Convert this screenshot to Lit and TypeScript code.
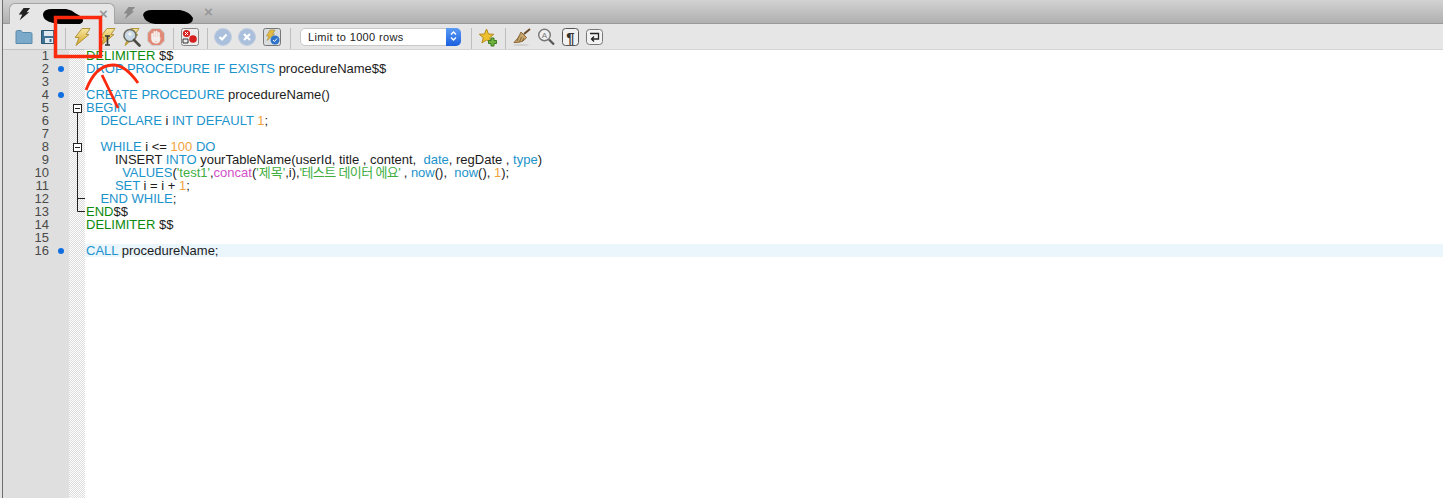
import { LitElement, html, css, svg } from "lit";
import { customElement } from "lit/decorators.js";

type Seg = [string, string?];
interface Line { n: number; dot?: boolean; fold?: string; segs: Seg[]; active?: boolean }

const LINES: Line[] = [
  { n: 1, segs: [["DELIMITER", "g"], [" $$"]] },
  { n: 2, dot: true, segs: [["DROP PROCEDURE IF EXISTS", "k"], [" procedureName$$"]] },
  { n: 3, segs: [] },
  { n: 4, dot: true, segs: [["CREATE PROCEDURE", "k"], [" procedureName()"]] },
  { n: 5, fold: "open", segs: [["BEGIN", "k"]] },
  { n: 6, fold: "line", segs: [["    "], ["DECLARE", "k"], [" i "], ["INT DEFAULT", "k"], [" "], ["1", "o"], [";"]] },
  { n: 7, fold: "line", segs: [] },
  { n: 8, fold: "open2", segs: [["    "], ["WHILE", "k"], [" i <= "], ["100", "o"], [" "], ["DO", "k"]] },
  { n: 9, fold: "line", segs: [["        INSERT "], ["INTO", "k"], [" yourTableName(userId, title , content,  "], ["date", "k"], [", regDate , "], ["type", "k"], [")"]] },
  { n: 10, fold: "line", segs: [["          "], ["VALUES", "k"], ["("], ["'test1'", "s"], [","], ["concat", "f"], ["("], ["'제목'", "s"], [",i),"], ["'테스트 데이터 에요'", "s n"], [" , "], ["now", "k"], ["(),  "], ["now", "k"], ["(), "], ["1", "o"], [");"]] },
  { n: 11, fold: "line", segs: [["        "], ["SET", "k"], [" i = i + "], ["1", "o"], [";"]] },
  { n: 12, fold: "tee", segs: [["    "], ["END WHILE", "k"], [";"]] },
  { n: 13, fold: "end", segs: [["END", "g"], ["$$"]] },
  { n: 14, segs: [["DELIMITER", "g"], [" $$"]] },
  { n: 15, segs: [] },
  { n: 16, dot: true, active: true, segs: [["CALL", "k"], [" procedureName;"]] },
];

const bolt = (id: string) => svg`
  <defs><linearGradient id="${id}" x1="0" y1="0" x2="0" y2="1"><stop offset="0" stop-color="#f6e6a0"/><stop offset="1" stop-color="#d2a526"/></linearGradient></defs>
  <path d="M10 1.500 H18 L14 7.500 H17 L4 18.500 L7 10.500 H3 Z" fill="url(#${id})" stroke="#b2953a" stroke-width="1"/>`;

const lens = svg`<circle cx="9" cy="8.500" r="6" fill="#c9d8e6" stroke="#6d6d60" stroke-width="1.600"/><circle cx="9" cy="7" r="1.800" fill="#f3f3ee"/><path d="M13 13 L18.500 18.500" stroke="#4c4b44" stroke-width="2.600" stroke-linecap="round"/>`;

function ico(body: unknown) {
  return html`<svg class="ico" width="20" height="20" viewBox="0 0 20 20" aria-hidden="true">${body}</svg>`;
}

const boxed = svg`<rect x="4.500" y="3.500" width="8" height="8" fill="#fff" stroke="#222"/><path d="M6 7.500h5M8.500 11.500V13" stroke="#222" fill="none"/>`;
const foldSvg: Record<string, unknown> = {
  open: boxed,
  open2: svg`<path d="M8.500 0V3.500" stroke="#222"/>${boxed}`,
  line: svg`<path d="M8.500 0V13" stroke="#222" fill="none"/>`,
  tee: svg`<path d="M8.500 0V13M8.500 6.500H16" stroke="#222" fill="none"/>`,
  end: svg`<path d="M8.500 0V6.500H16" stroke="#222" fill="none"/>`,
};

@customElement("app-root")
export class AppRoot extends LitElement {
  static styles = css`
    :host { display: block; position: relative; width: 1443px; height: 498px; overflow: hidden; background: #fff;
      font-family: "Liberation Sans", "Noto Sans CJK KR", sans-serif; }
    .tabbar { height: 24px; display: flex; align-items: flex-end; padding-left: 9px; box-sizing: border-box;
      background: linear-gradient(#d2d2d2, #b0b0b0); border-bottom: 1px solid #9a9a9a; }
    .tab { box-sizing: border-box; display: flex; align-items: center; position: relative; height: 20px; }
    .tab.on { width: 106px; height: 21px; margin-bottom: -1px; background: #e6e6e6; border: 1px solid #a5a5a5; border-bottom: 0; border-radius: 6px 6px 0 0; padding-left: 7px; }
    .tab.off { width: 100px; padding-left: 7px; }
    .close { font-size: 15px; font-weight: bold; color: #999; line-height: 1; position: absolute; left: 89px; top: 2px; }
    .off .close { left: 89px; top: 1px; }
    .toolbar { height: 25px; padding-top: 1px; background: #e6e6e6; box-sizing: border-box; display: flex; align-items: center; padding-left: 14px; }
    .ico { display: block; flex: none; margin-right: 4.5px; }
    .sep { width: 1px; height: 21px; align-self: flex-end; background: #bdbdbd; flex: none; margin: 0 6px 0 2px; }
    .sep.a { margin-left: 3px; }
    .sep.b { margin-right: 5px; }
    .sep.c { margin: 0 9px 0 4px; }
    .sep.d { margin: 0 6px 0 10px; }
    .combo { width: 161px; height: 18px; flex: none; box-sizing: border-box; background: #fff; border-radius: 5px; border: 1px solid #c8c8c8; position: relative; margin-top: -1px;
      font-size: 11px; line-height: 16px; padding-left: 7px; color: #222; letter-spacing: .35px; }
    .combo i { position: absolute; right: -1px; top: -1px; bottom: -1px; width: 15px; background: linear-gradient(#5c9cf5, #1a5fe0); border-radius: 0 5px 5px 0; }
    .combo svg { position: absolute; left: 3px; top: 2.500px; }
    .editor { position: relative; height: 449px; background: #fff; display: flex; }
    .gutter { flex: none; width: 69px; background: #dfdfdf; box-shadow: inset 0 1px #c4c4c4; }
    .margin { width: 16px; flex: none; background-color: #fff; background-image: repeating-conic-gradient(#dcdcdc 0 25%, #fff 0 50%); background-size: 2px 2px; box-shadow: inset 0 1px #c4c4c4; }
    .code { flex: 1; box-shadow: inset 0 1px #d4d4d4; }
    .rows { position: absolute; inset: 0; display: flex; flex-direction: column; }
    .row { flex: none; height: 13px; display: grid; grid-template-columns: 49px 18px 18px 1fr; font-size: 13px; line-height: 13px; white-space: pre; color: #1c1c1c; }
    .num { text-align: right; color: #4a4a4a; }
    .dotc { display: flex; align-items: center; padding-left: 9px; }
    .dot { width: 6px; height: 6px; border-radius: 50%; background: #0f6fe0; }
    .foldc svg { display: block; margin-left: 2px; }
    .txt { padding-left: 1px; }
    .row.active .txt { background: #eaf6fc; }
    .k { color: #1b93cc; } .g { color: #0b8a0b; } .o { color: #f0a23c; } .s { color: #3fae3f; } .f { color: #d24fc8; }
    .n { letter-spacing: -.62px; }
    .strip { position: absolute; left: 0; top: 0; bottom: 0; width: 2px; background: #e2e2e2; border-right: 1px solid #6e6e6e; }
    .overlay { position: absolute; left: 0; top: 0; width: 1443px; height: 498px; pointer-events: none; }
  `;

  render() {
    return html`
      <div class="tabbar">
        <div class="tab on">
          <svg width="14" height="14" viewBox="0 0 16 16"><path d="M7.500 1 H15 L11 6 H14 L3 15 L6 8.500 H2 Z" fill="#222"/></svg>
          <span class="close">×</span>
        </div>
        <div class="tab off">
          <svg width="14" height="14" viewBox="0 0 16 16"><path d="M7.500 1 H15 L11 6 H14 L3 15 L6 8.500 H2 Z" fill="#8a8a8a"/></svg>
          <span class="close">×</span>
        </div>
      </div>
      <div class="toolbar">
        ${ico(svg`<path d="M2 5 Q2 3.500 3.500 3.500 H7 L8.500 5.500 H16.500 Q18 5.500 18 7 V16.500 H2 Z" fill="#7aa9c9" stroke="#5a8aaa"/>`)}
        ${ico(svg`<path d="M2.500 3.500 H15 L17.500 6 V16.500 H2.500 Z" fill="#3f7396" stroke="#2c5672"/><rect x="5" y="4" width="9" height="5" fill="#dfe8ee"/><rect x="6" y="11" width="8" height="5" fill="#dfe8ee"/><rect x="10.500" y="12" width="2" height="3" fill="#3f7396"/>`)}
        <span class="sep"></span>
        ${ico(bolt("b1"))}
        ${ico(svg`${bolt("b2")}<path d="M8 9h5M8 18h5M10.500 9v9" stroke="#333" stroke-width="1.600"/>`)}
        ${ico(svg`${bolt("b3")}${lens}`)}
        ${ico(svg`<path d="M6 1.500 H14 L18.500 6 V14 L14 18.500 H6 L1.500 14 V6 Z" fill="#e28a78" stroke="#cfcfcf"/><path d="M6.200 11 V7 M8.400 10 V5 M10.600 10 V4.800 M12.800 10.500 V6 M6.200 11 Q6 15.500 10 15.500 Q13.500 15.500 13.500 11" stroke="#f4efec" stroke-width="2" fill="none" stroke-linecap="round"/><path d="M7 10h6v4H7z" fill="#f4efec"/>`)}
        <span class="sep a"></span>
        ${ico(svg`<rect x="1.500" y="1.500" width="17" height="17" rx="2" fill="#ededed" stroke="#888"/><circle cx="6.500" cy="6.500" r="3.600" fill="#d62020"/><circle cx="13" cy="12" r="3.800" fill="#d62020"/><path d="M5 5l3 3M8 5l-3 3" stroke="#fff"/><path d="M3 12h5v4H3z" fill="none" stroke="#333"/>`)}
        <span class="sep b"></span>
        ${ico(svg`<circle cx="10" cy="10" r="8.500" fill="#a9bfdc" stroke="#c2cfdf"/><path d="M6.500 10l2.500 2.500 4.500-5" stroke="#fff" stroke-width="2.200" fill="none"/>`)}
        ${ico(svg`<circle cx="10" cy="10" r="8.500" fill="#a9bfdc" stroke="#c2cfdf"/><path d="M7 7l6 6M13 7l-6 6" stroke="#fff" stroke-width="2.200" fill="none"/>`)}
        ${ico(svg`<rect x="1.500" y="1.500" width="17" height="17" rx="2" fill="#d9dde0" stroke="#777"/><path d="M8 3 H13 L10.500 7 H12.500 L5 13.500 L7 9 H4.500 Z" fill="#e2bc45" stroke="#a88a2a" stroke-width=".6"/><circle cx="13" cy="13" r="4.500" fill="#2f74c8"/><path d="M11 13l1.500 1.500 2.500-3" stroke="#fff" fill="none"/>`)}
        <span class="sep c"></span>
        <div class="combo">Limit to 1000 rows<i><svg width="9" height="12" viewBox="0 0 9 12"><path d="M2 4.500l2.500-2.500L7 4.500M2 7.500l2.500 2.500L7 7.500" stroke="#fff" stroke-width="1.400" fill="none"/></svg></i></div>
        <span class="sep d"></span>
        ${ico(svg`<path d="M8.500 2l2 5 5.300.3-4.100 3.400 1.400 5.200L8.500 13l-4.600 2.900 1.400-5.200L1.200 7.300 6.500 7z" fill="#eec22e" stroke="#b58a1a"/><path d="M13 11h3v2.500h2.500v3H16V19h-3v-2.500h-2.500v-3H13z" fill="#6fb23f" stroke="#3f7a1f"/>`)}
        <span class="sep"></span>
        ${ico(svg`<path d="M18 2 L12 7" stroke="#6b4a2a" stroke-width="2"/><path d="M9 5 L14.500 10.500 Q11 16 2 15.500 Q7 11 9 5Z" fill="#c5a36a" stroke="#8a6a3a"/><path d="M7 9l-2 5M9.500 10l-2 5M12 11l-2 4" stroke="#8a6a3a" fill="none"/><ellipse cx="9" cy="18" rx="8" ry="1" fill="#d0d0d0"/>`)}
        ${ico(svg`<circle cx="8.500" cy="8" r="5.800" fill="#f0f0f0" stroke="#777" stroke-width="1.400"/><path d="M13 12.500L18 17.500" stroke="#555" stroke-width="2.200"/><text x="8.500" y="11" font-size="8" text-anchor="middle" fill="#777" font-family="Liberation Sans">A</text>`)}
        ${ico(svg`<rect x="1.500" y="1.500" width="16" height="17" rx="3" fill="#f2f2f2" stroke="#555"/><text x="9.500" y="15.500" font-size="15" font-weight="bold" text-anchor="middle" fill="#333" font-family="Liberation Sans">¶</text>`)}
        ${ico(svg`<rect x="1.500" y="2.500" width="16" height="15" rx="3" fill="#f2f2f2" stroke="#777"/><path d="M5 6.500h8.500V12H7M9 9.500L6.500 12 9 14.500" stroke="#222" stroke-width="1.300" fill="none"/>`)}
      </div>
      <div class="editor">
        <div class="gutter"></div>
        <div class="margin"></div>
        <div class="code"></div>
        <div class="rows">
          ${LINES.map((l) => html`
            <div class="row ${l.active ? "active" : ""}">
              <span class="num">${l.n}</span>
              <span class="dotc">${l.dot ? html`<span class="dot"></span>` : ""}</span>
              <span class="foldc">${l.fold ? html`<svg width="16" height="13" viewBox="0 0 16 13">${foldSvg[l.fold]}</svg>` : ""}</span>
              <span class="txt">${l.segs.map(([t, c]) => (c ? html`<span class="${c}">${t}</span>` : t))}</span>
            </div>`)}
        </div>
      </div>
      <div class="strip"></div>
      <svg class="overlay" viewBox="0 0 1443 498" aria-hidden="true">
        <path d="M43 14 Q44 9 52 9 L66 9 Q72 10 75 13 L82 17 Q85 22 80 24 L60 24 Q50 23 46 20 Q43 18 43 14Z" fill="#000"/>
        <path d="M143 15 Q144 10 152 10 H180 Q190 12 193 18 Q193 24 185 24 H155 Q145 23 143 15Z" fill="#000"/>
        <rect x="55.500" y="17.500" width="45" height="39" fill="none" stroke="#fb2a0e" stroke-width="3.500"/>
        <path d="M86 90 C93 72 103 65 113 65 C123 65 131 73 138 83" fill="none" stroke="#fb2a0e" stroke-width="2.800"/>
        <path d="M102 75 L118 108" fill="none" stroke="#fb2a0e" stroke-width="2.800"/>
      </svg>
    `;
  }
}
